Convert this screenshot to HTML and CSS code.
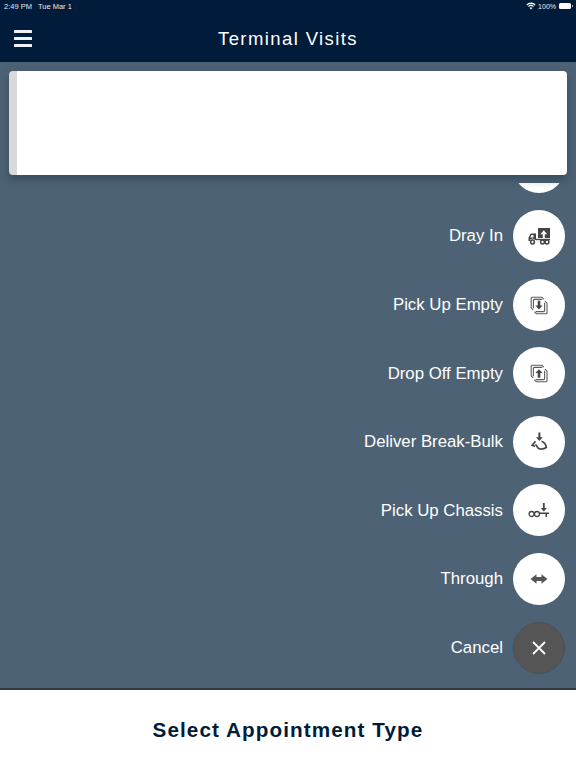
FILE: index.html
```html
<!DOCTYPE html>
<html lang="en">
<head>
<meta charset="utf-8">
<title>Terminal Visits</title>
<link rel="stylesheet" href="styles.css">
</head>
<body>
<div class="app">
  <header class="topbar">
    <div class="status">
      <span class="status-time">2:49 PM</span>
      <span class="status-date">Tue Mar 1</span>
      <span class="status-right">
        <svg class="wifi" viewBox="0 0 12 9" width="10" height="8"><path d="M6 8.600 4.400 6.800a2.300 2.300 0 0 1 3.200 0zM3.500 5.800 2.500 4.700a5 5 0 0 1 7 0l-1 1.100a3.600 3.600 0 0 0-5 0zM1.600 3.800.5 2.700a7.800 7.800 0 0 1 11 0l-1.100 1.100a6.300 6.300 0 0 0-8.800 0z" fill="#fff"/></svg>
        <span class="status-pct">100%</span>
        <span class="battery"></span>
      </span>
    </div>
    <div class="titlebar">
      <div class="menu"><span></span><span></span><span></span></div>
      <h1 class="title">Terminal Visits</h1>
    </div>
  </header>
  <main class="overlay">
    <div class="card"></div>
    <div class="actions">
      <div class="action"><span class="fab"></span></div>
      <div class="action"><span class="label">Dray In</span>
        <span class="fab"><svg viewBox="0 0 24 24" width="24" height="24"><g fill="none" stroke="#444" stroke-width="1.500"><circle cx="5.500" cy="18" r="1.900"/><circle cx="15.500" cy="18" r="1.900"/><circle cx="20" cy="18" r="1.900"/></g><path d="M1.500 17v-3.600L3.800 9.500H9V16H8a2.800 2.800 0 0 0-5 0v1zM3.200 13.400h3.300v-2.500H4.500z" fill="#444"/><path d="M9 14.800h14v1.400H9z" fill="#444"/><path d="M11 4h12v10h-5.200v-3.700h2.400L16.800 6.200l-3.400 4.100h2.400V14H11z" fill="#444"/></svg></span></div>
      <div class="action"><span class="label">Pick Up Empty</span>
        <span class="fab"><svg viewBox="0 0 24 24" width="24" height="24"><g fill="none" stroke="#5c5c5c" stroke-width="1.100"><path d="M16.800 6.200 14.800 4.200H5.200a1 1 0 0 0-1 1v9.600l2 2"/><path d="M15.300 6.400H7.400a1 1 0 0 0-1 1v7.900"/><path d="M7.400 18.800l2 2h9.600a1 1 0 0 0 1-1V10.200l-2-2"/><path d="M8.700 18.600h7.900a1 1 0 0 0 1-1V9.700"/></g><path d="M10.700 7.800h2.600v4.700h2.300L12 16.400l-3.600-3.900h2.300z" fill="#444"/></svg></span></div>
      <div class="action"><span class="label">Drop Off Empty</span>
        <span class="fab"><svg viewBox="0 0 24 24" width="24" height="24"><g fill="none" stroke="#5c5c5c" stroke-width="1.100"><path d="M16.800 6.200 14.800 4.200H5.200a1 1 0 0 0-1 1v9.600l2 2"/><path d="M15.300 6.400H7.400a1 1 0 0 0-1 1v7.900"/><path d="M7.400 18.800l2 2h9.600a1 1 0 0 0 1-1V10.200l-2-2"/><path d="M8.700 18.600h7.900a1 1 0 0 0 1-1V9.700"/></g><path d="M10.700 16.800h2.600v-4.700h2.300L12 8.200l-3.600 3.900h2.300z" fill="#444"/></svg></span></div>
      <div class="action"><span class="label">Deliver Break-Bulk</span>
        <span class="fab"><svg viewBox="0 0 24 24" width="24" height="24"><path d="M11.400 2.500h2v4.800h2.400l-3.400 3.800L9 7.300h2.400z" fill="#444"/><path d="M8.500 11.200 5.200 15.200 8 16.500M14.500 11.300c2.500.8 4.400 3.500 4.800 6.100-1.800 1.700-5.800 2.100-8 .8-1.500-.9-1.300-3.300-3-3.500" fill="none" stroke="#444" stroke-width="1.700"/></svg></span></div>
      <div class="action"><span class="label">Pick Up Chassis</span>
        <span class="fab"><svg viewBox="0 0 24 24" width="24" height="24"><g fill="none" stroke="#444" stroke-width="1.300"><circle cx="4.600" cy="16" r="2.500"/><circle cx="10" cy="16" r="2.500"/></g><path d="M12.500 14.600H22V16h-2v3h-1.500v-3h-6z" fill="#444"/><path d="M15.900 5h1.800v5h2.200l-3.100 3.400-3.100-3.400h2.200z" fill="#444"/></svg></span></div>
      <div class="action"><span class="label">Through</span>
        <span class="fab"><svg viewBox="0 0 24 24" width="24" height="24"><path d="M3.500 12l6-4.800v2.700h5V7.200l6 4.800-6 4.800v-2.700h-5v2.700z" fill="#555"/></svg></span></div>
      <div class="action"><span class="label">Cancel</span>
        <span class="fab fab-cancel"><svg viewBox="0 0 24 24" width="24" height="24"><path d="M6 6l12 12M18 6 6 18" stroke="#fff" stroke-width="1.800" fill="none"/></svg></span></div>
    </div>
  </main>
  <footer class="sheet">
    <h2 class="sheet-title">Select Appointment Type</h2>
  </footer>
</div>
</body>
</html>
```
FILE: styles.css
```css
* { box-sizing: border-box; }
html, body { margin: 0; padding: 0; }
body { font-family: "Liberation Sans", Arial, sans-serif; }
.app { width: 576px; height: 768px; display: flex; flex-direction: column; overflow: hidden; background: #4d6275; }
.topbar { height: 62px; background: #001c3a; color: #fff; display: flex; flex-direction: column; flex: none; }
.status { height: 12px; display: flex; align-items: center; font-size: 7.500px; padding: 0 5px 0 4px; color: #e6eaee; gap: 6px; }
.status-right { margin-left: auto; display: flex; align-items: center; gap: 2px; }
.status-pct { font-size: 7px; }
.battery { width: 12px; height: 6px; border-radius: 1.500px; background: #fff; display: block; position: relative; margin-left: 1px; }
.battery::after { content: ""; position: absolute; left: 13px; top: 2px; width: 1px; height: 2px; background: #aab2bb; }
.titlebar { flex: 1; position: relative; display: flex; align-items: center; justify-content: center; padding-top: 3px; }
.menu { position: absolute; left: 14px; top: 18px; width: 18px; display: flex; flex-direction: column; gap: 4.400px; }
.menu span { display: block; height: 2.600px; background: #f0f2f4; border-radius: 0.500px; }
.title { margin: 0; font-weight: 400; font-size: 18.500px; letter-spacing: 1.400px; line-height: 24px; color: #fff; }
.overlay { flex: 1; min-height: 0; display: flex; flex-direction: column; padding: 9px 9px 0; border-bottom: 2px solid #333b42; }
.card { flex: none; height: 104px; border-radius: 4px; background: #fff; border-left: 8px solid #d9d9d9; box-shadow: 0 4px 10px rgba(30, 45, 60, .45); position: relative; z-index: 1; }
.actions { flex: 1; min-height: 0; margin-top: 8px; overflow: hidden; display: flex; flex-direction: column; justify-content: flex-end; gap: 16.600px; padding: 0 2px 14.500px 0; }
.action { display: flex; align-items: center; justify-content: flex-end; gap: 10px; flex: none; height: 52px; }
.label { color: #fff; font-size: 16.800px; line-height: 20px; padding-top: 1px; }
.fab { width: 52px; height: 52px; border-radius: 50%; background: #fff; display: flex; align-items: center; justify-content: center; flex: none; }
.fab-cancel { background: #555; border: 1px solid #4b5258; }
.sheet { flex: none; height: 78px; background: #fff; display: flex; align-items: center; justify-content: center; padding-top: 2px; }
.sheet-title { margin: 0; color: #001c3a; font-size: 20.700px; font-weight: 700; letter-spacing: 1.080px; line-height: 26px; }
```
